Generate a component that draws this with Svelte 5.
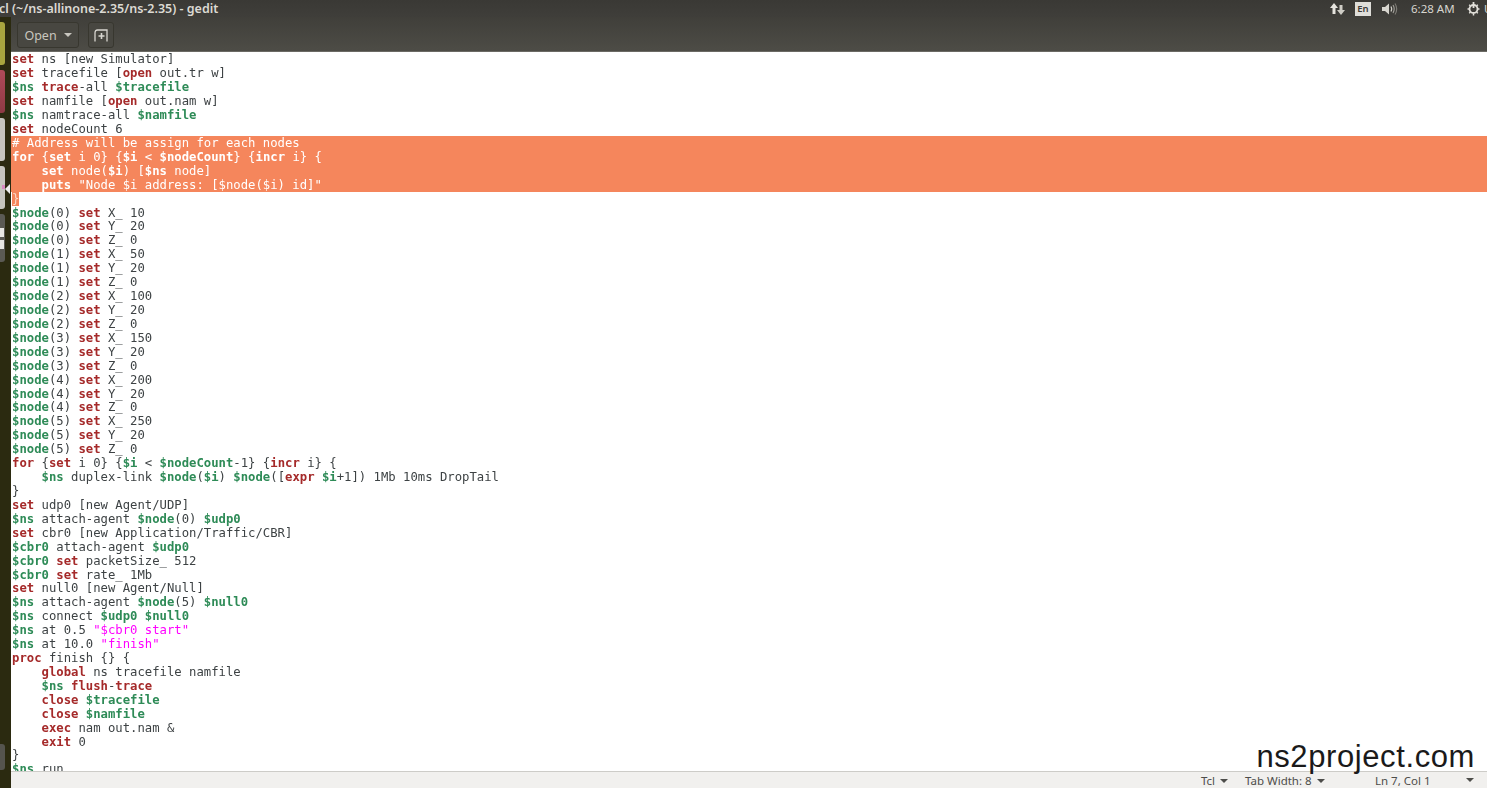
<script>
	const source = `set ns [new Simulator]
set tracefile [open out.tr w]
$ns trace-all $tracefile
set namfile [open out.nam w]
$ns namtrace-all $namfile
set nodeCount 6
# Address will be assign for each nodes
for {set i 0} {$i < $nodeCount} {incr i} {
    set node($i) [$ns node]
    puts "Node $i address: [$node($i) id]"
}
$node(0) set X_ 10
$node(0) set Y_ 20
$node(0) set Z_ 0
$node(1) set X_ 50
$node(1) set Y_ 20
$node(1) set Z_ 0
$node(2) set X_ 100
$node(2) set Y_ 20
$node(2) set Z_ 0
$node(3) set X_ 150
$node(3) set Y_ 20
$node(3) set Z_ 0
$node(4) set X_ 200
$node(4) set Y_ 20
$node(4) set Z_ 0
$node(5) set X_ 250
$node(5) set Y_ 20
$node(5) set Z_ 0
for {set i 0} {$i < $nodeCount-1} {incr i} {
    $ns duplex-link $node($i) $node([expr $i+1]) 1Mb 10ms DropTail
}
set udp0 [new Agent/UDP]
$ns attach-agent $node(0) $udp0
set cbr0 [new Application/Traffic/CBR]
$cbr0 attach-agent $udp0
$cbr0 set packetSize_ 512
$cbr0 set rate_ 1Mb
set null0 [new Agent/Null]
$ns attach-agent $node(5) $null0
$ns connect $udp0 $null0
$ns at 0.5 "$cbr0 start"
$ns at 10.0 "finish"
proc finish {} {
    global ns tracefile namfile
    $ns flush-trace
    close $tracefile
    close $namfile
    exec nam out.nam &
    exit 0
}
$ns run`.split("\n");

	const tokenRe = /("[^"]*")|(\$\w+)|\b(set|open|trace|for|incr|puts|expr|proc|global|flush|close|exec|exit)\b(?![(_])|(^#.*)/g;

	function tokenize(line) {
		const out = [];
		let last = 0;
		for (const m of line.matchAll(tokenRe)) {
			if (m.index > last) out.push({ text: line.slice(last, m.index), kind: "" });
			const kind = m[1] ? "str" : m[2] ? "var" : m[3] ? "kw" : "com";
			out.push({ text: m[0], kind });
			last = m.index + m[0].length;
		}
		if (last < line.length) out.push({ text: line.slice(last), kind: "" });
		return out;
	}

	const lines = source.map(tokenize);
</script>

<div class="desktop">
	<header class="panel">
		<span class="title">cl (~/ns-allinone-2.35/ns-2.35) - gedit</span>
		<div class="indicators">
			<svg class="net" width="15" height="14" viewBox="0 0 15 14">
				<path d="M4 1 L8 6 H5.5 V12 H2.5 V6 H0 Z" fill="#e6e4de" />
				<path d="M11 13 L7 8 H9.5 V3 H12.5 V8 H15 Z" fill="#cfcdc6" />
			</svg>
			<span class="lang">En</span>
			<svg class="vol" width="16" height="14" viewBox="0 0 16 14" fill="none">
				<path d="M0 5 H3 L7 1.5 V12.5 L3 9 H0 Z" fill="#d8d6cf" />
				<path d="M9 4.5 Q10.5 7 9 9.5" stroke="#d8d6cf" stroke-width="1.2" />
				<path d="M11 3 Q13.4 7 11 11" stroke="#a5a39c" stroke-width="1.1" />
				<path d="M13 1.5 Q16.4 7 13 12.5" stroke="#7f7d77" stroke-width="1.1" />
			</svg>
			<span class="clock">6:28 AM</span>
			<svg class="power" width="15" height="15" viewBox="0 0 15 15" fill="none" stroke="#e2e0da">
				<circle cx="7.5" cy="8" r="4" stroke-width="1.8" />
				<path d="M7.5 1 V7" stroke-width="1.8" />
				<path d="M1.5 8 H3 M12 8 H13.5 M3.2 3.7 L4.3 4.8 M11.8 3.7 L10.7 4.8 M3.2 12.3 L4.3 11.2 M11.8 12.3 L10.7 11.2 M7.5 13 V14.5" stroke-width="1.5" />
			</svg>
			<span class="cut">U</span>
		</div>
	</header>

	<div class="body">
		<nav class="launcher">
			<div class="tile olive"></div>
			<div class="tile red"></div>
			<div class="tile grey"></div>
			<div class="tile grey pink"><i></i></div>
			<div class="tile dark"><b></b><b></b></div>
			<div class="tile dark last"></div>
			<span class="pip"></span>
		</nav>

		<main class="window">
			<div class="toolbar">
				<button class="btn open">Open <span class="caret"></span></button>
				<button class="btn newtab" aria-label="New tab">
					<svg width="14" height="13" viewBox="0 0 14 13" fill="none" stroke="#d8d6d0" stroke-width="1.3">
						<path d="M1 12.5 V4 Q1 1 3.5 1 H13 V12.5" />
						<path d="M7.5 4 V10 M4.5 7 H10.5" stroke-width="1.6" />
					</svg>
				</button>
			</div>

			<div class="editor">
				{#each lines as line, i}
					<div class="line" class:sel={i >= 6 && i <= 9}>
						{#if i === 10}
							<span class="endsel">{"}"}</span>
						{:else}
							{#each line as tok}
								<span class={tok.kind}>{tok.text}</span>
							{/each}
						{/if}
					</div>
				{/each}
			</div>

			<footer class="status">
				<span class="st tcl">Tcl <span class="caret small"></span></span>
				<span class="st tabw">Tab Width: 8 <span class="caret small"></span></span>
				<span class="st pos">Ln 7, Col 1</span>
				<span class="caret small end"></span>
			</footer>
		</main>
	</div>

	<div class="watermark">ns2project.com</div>
</div>

<style>
	:global(body) {
		margin: 0;
		overflow: hidden;
	}

	.desktop {
		position: relative;
		width: 1487px;
		height: 788px;
		overflow: hidden;
		display: flex;
		flex-direction: column;
		background: #fff;
		font-family: "Noto Sans", sans-serif;
	}

	.panel {
		flex: 0 0 17px;
		display: flex;
		align-items: center;
		justify-content: space-between;
		background: linear-gradient(#3a3935, #3f3e3a);
		overflow: hidden;
	}

	.title {
		font-size: 12.5px;
		font-weight: 600;
		color: #dcdad3;
		margin-left: -1px;
		white-space: nowrap;
	}

	.indicators {
		display: flex;
		align-items: center;
		margin-right: -6px;
		color: #d8d6cf;
		font-size: 11.5px;
	}

	.net { margin-right: 10px; }

	.lang {
		width: 16px;
		height: 14px;
		background: #dfded9;
		color: #3b3a36;
		font-size: 9.5px;
		font-weight: 600;
		text-align: center;
		line-height: 14px;
		margin-right: 11px;
	}

	.vol { margin-right: 13px; }
	.clock { width: 46px; margin-right: 9px; white-space: nowrap; }
	.power { margin-right: 3px; }
	.cut { width: 9px; }

	.body {
		flex: 1;
		min-height: 0;
		display: flex;
	}

	.launcher {
		position: relative;
		flex: 0 0 11px;
		display: flex;
		flex-direction: column;
		gap: 5px;
		padding-top: 5px;
		box-sizing: border-box;
		background: #2b2a10;
	}

	.tile {
		width: 5px;
		height: 43px;
		border-radius: 0 3px 3px 0;
		position: relative;
	}

	.olive { background: #a9a63e; }
	.red { background: linear-gradient(#b04a58, #8e3a44); }
	.grey { background: #c6c5bf; height: 43px; }
	.pink i {
		position: absolute;
		right: 0;
		top: 19px;
		width: 3px;
		height: 4px;
		background: #d98ac0;
	}

	.dark {
		background: #5b5a54;
		height: 48px;
		display: flex;
		flex-direction: column;
		gap: 3px;
		padding-top: 14px;
		box-sizing: border-box;
	}

	.dark b {
		width: 4px;
		height: 9px;
		background: #e8e7e3;
	}

	.last {
		margin-top: auto;
		margin-bottom: 18px;
		height: 26px;
		background: #55544e;
	}

	.pip {
		position: absolute;
		right: 1px;
		top: 167px;
		width: 0;
		height: 0;
		border: 5px solid transparent;
		border-left-width: 0;
		border-right: 5px solid #eeeeec;
	}

	.window {
		flex: 1;
		min-width: 0;
		display: flex;
		flex-direction: column;
	}

	.toolbar {
		flex: 0 0 35px;
		display: flex;
		align-items: flex-start;
		gap: 9px;
		padding: 5px 0 0 6px;
		box-sizing: border-box;
		background: linear-gradient(#403f3a, #4d4c46);
		border-bottom: 1px solid #6b6a64;
	}

	.btn {
		height: 26px;
		padding: 0;
		display: flex;
		align-items: center;
		justify-content: center;
		background: #484741;
		border: 1px solid #38372f;
		border-radius: 3px;
		color: #c8c6bf;
		font: 12.5px "Noto Sans", sans-serif;
	}

	.open { width: 62px; gap: 7px; }
	.newtab { width: 26px; }

	.caret {
		display: inline-block;
		width: 0;
		height: 0;
		border: 4px solid transparent;
		border-top: 4px solid #c8c6bf;
		border-bottom-width: 0;
	}

	.editor {
		flex: 1;
		min-height: 0;
		overflow: hidden;
		background: #fff;
		padding-top: 0.4px;
		font: 12.25px/15.6px "DejaVu Sans Mono", monospace;
		color: #3d4244;
		filter: blur(0.25px);
	}

	.line {
		height: 13.93px;
		padding-left: 1px;
		white-space: pre;
	}

	.kw { color: #a52a2a; font-weight: bold; }
	.var { color: #2e8b57; font-weight: bold; }
	.str { color: #ff00ff; }
	.com { color: #fff; }

	.sel {
		background: #f5865c;
		color: #fff;
	}

	.sel .kw, .sel .var, .sel .str { color: #fff; }

	.endsel {
		background: #f5865c;
		color: #fbd9c8;
		display: inline-block;
		height: 13.93px;
	}

	.status {
		flex: 0 0 17px;
		display: flex;
		align-items: center;
		box-sizing: border-box;
		background: #f1f0ee;
		border-top: 1px solid #cdccc8;
		color: #4d4d4a;
		font-size: 11.5px;
		white-space: nowrap;
	}

	.caret.small {
		border-width: 4px 4px 0;
		border-top-color: #4d4d4a;
		margin-left: 2px;
		vertical-align: 2px;
	}

	.tcl { margin-left: 1190px; width: 44px; }
	.tabw { width: 130px; }
	.pos { width: 89px; }

	.watermark {
		position: absolute;
		right: 12px;
		bottom: 14px;
		font: 31px/34px "Liberation Sans", sans-serif;
		color: #1a1a1a;
		letter-spacing: 0.6px;
	}
</style>
